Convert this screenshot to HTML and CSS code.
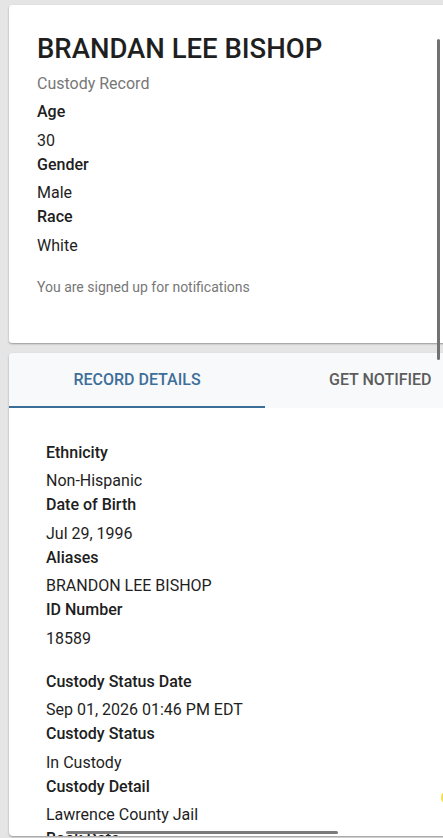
FILE: index.html
```html
<!DOCTYPE html>
<html lang="en">
<head>
<meta charset="utf-8">
<title>Custody Record</title>
<link rel="stylesheet" href="styles.css">
</head>
<body>
<div class="page">
  <section class="card summary">
    <h1 class="title">BRANDAN LEE BISHOP</h1>
    <div class="subtitle">Custody Record</div>
    <dl class="fields">
      <dt>Age</dt><dd>30</dd>
      <dt>Gender</dt><dd>Male</dd>
      <dt>Race</dt><dd>White</dd>
    </dl>
    <p class="notice">You are signed up for notifications</p>
  </section>
  <section class="card details">
    <nav class="tabs">
      <div class="tab active">RECORD DETAILS</div>
      <div class="tab">GET NOTIFIED</div>
    </nav>
    <div class="panel">
      <dl class="fields group">
        <dt>Ethnicity</dt><dd>Non-Hispanic</dd>
        <dt>Date of Birth</dt><dd>Jul 29, 1996</dd>
        <dt>Aliases</dt><dd>BRANDON LEE BISHOP</dd>
        <dt>ID Number</dt><dd>18589</dd>
      </dl>
      <dl class="fields group">
        <dt>Custody Status Date</dt><dd>Sep 01, 2026 01:46 PM EDT</dd>
        <dt>Custody Status</dt><dd>In Custody</dd>
        <dt>Custody Detail</dt><dd>Lawrence County Jail</dd>
        <dt>Book Date</dt><dd>Sep 01, 2026</dd>
      </dl>
    </div>
  </section>
</div>
<div class="vscroll"></div>
<div class="hscroll"></div>
<div class="dot"></div>
</body>
</html>
```

FILE: styles.css
```css
html, body {
  margin: 0;
  padding: 0;
}
body {
  background: #e5e5e5;
  font-family: Roboto, "Noto Sans", Arial, sans-serif;
  color: #212121;
  height: 838px;
  overflow: hidden;
  position: relative;
}
.page {
  padding: 5px 0 0 9px;
  display: flex;
  flex-direction: column;
  gap: 10px;
  width: 520px;
}
.card {
  background: #fff;
  border-radius: 3px;
  box-shadow: 0 1px 2px rgba(0, 0, 0, 0.35);
}
.summary {
  box-sizing: border-box;
  height: 338px;
  padding: 28px 28px 0;
}
.title {
  margin: 0;
  font-size: 27.5px;
  font-weight: 500;
  line-height: 32px;
  color: #1f1f1f;
}
.subtitle {
  margin-top: 7px;
  font-size: 16px;
  line-height: 24px;
  color: #777;
}
.fields {
  margin: 4px 0 0;
}
.fields dt {
  font-size: 16px;
  line-height: 24px;
  font-weight: 500;
  color: #202020;
}
.fields dd {
  margin: 0;
  padding-top: 4.5px;
  font-size: 16px;
  line-height: 24px;
  color: #1e1e1e;
}
.notice {
  margin: 19.5px 0 0;
  font-size: 14px;
  line-height: 20px;
  color: #777;
}
.details {
  height: 483px;
  overflow: hidden;
  border-radius: 4px;
}
.tabs {
  display: flex;
  background: #f8f9fb;
  height: 55px;
}
.tab {
  flex: none;
  box-sizing: border-box;
  height: 55px;
  padding: 0 64px;
  display: flex;
  align-items: center;
  justify-content: center;
  font-size: 16px;
  font-weight: 500;
  color: #5c5c5c;
  border-bottom: 2px solid transparent;
}
.tab.active {
  width: 256px;
  color: #3e6f99;
  border-bottom-color: #3c6d97;
}
.panel {
  padding: 32.5px 37px 0;
}
.panel .fields {
  margin: 0;
}
.panel .group + .group {
  margin-top: 19px;
}
.vscroll {
  position: absolute;
  left: 437px;
  top: 39px;
  width: 3px;
  height: 321px;
  border-radius: 2px;
  background: #727272;
}
.hscroll {
  position: absolute;
  left: 66px;
  top: 831px;
  width: 272px;
  height: 3px;
  border-radius: 2px;
  background: #7a7a7a;
}
.dot {
  position: absolute;
  left: 441px;
  top: 792px;
  width: 8px;
  height: 11px;
  border-radius: 50%;
  background: #f4e04a;
  filter: blur(0.6px);
}
```
